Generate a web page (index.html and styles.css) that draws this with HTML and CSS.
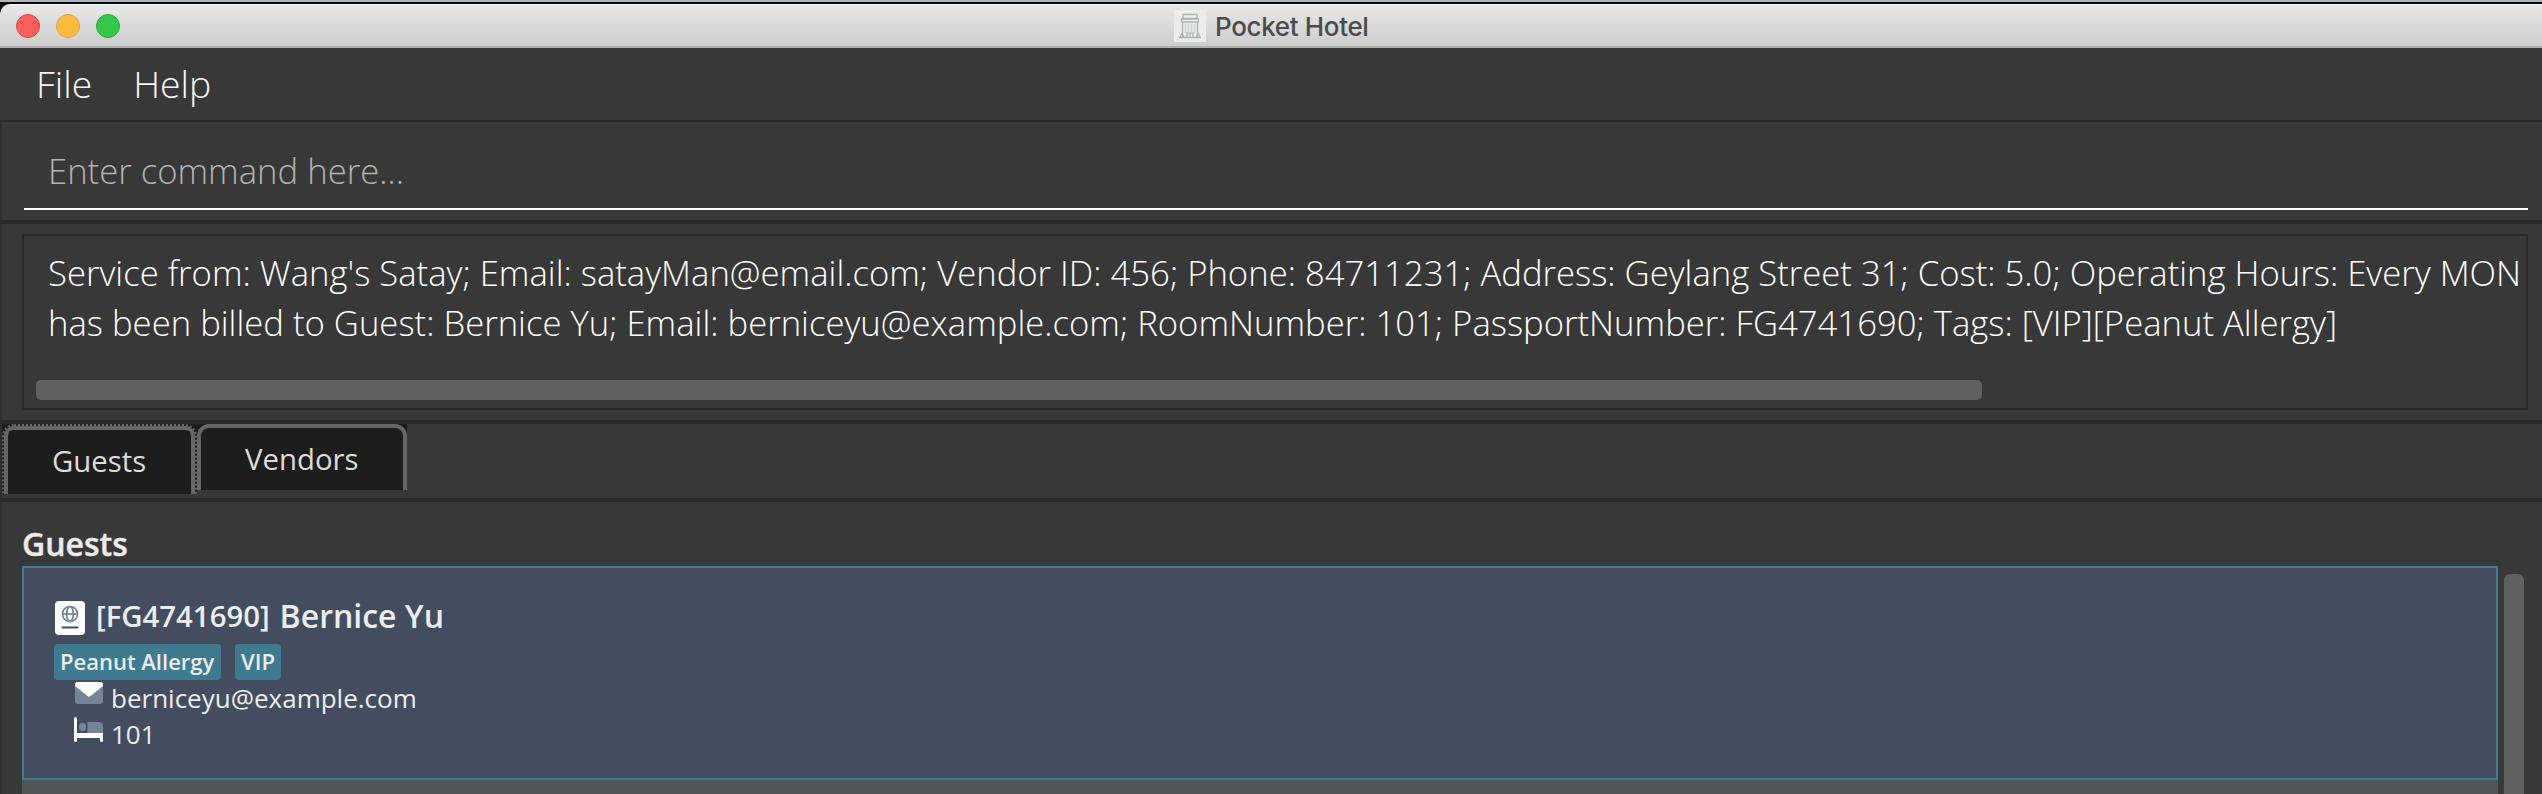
FILE: index.html
```html
<!DOCTYPE html>
<html lang="en">
<head>
<meta charset="utf-8">
<title>Pocket Hotel</title>
<link rel="stylesheet" href="styles.css">
</head>
<body>
<div class="desktop-strip"></div>
<div class="window">
  <header class="titlebar">
    <div class="lights"><span class="light red"></span><span class="light amber"></span><span class="light green"></span></div>
    <div class="title">
      <svg class="app-icon" viewBox="0 0 32 32"><rect width="32" height="32" fill="#ececec"/><g fill="none" stroke="#b0b2b5" stroke-width="1.300"><path d="M9 4.500h14v4H9zM7.500 9h17v3h-17zM8.500 12v15M23.500 12v15M5 27.500h22M13 27v-4h6v4M16 23v4M6 27l2-4 2 4M22 27l2-4 2 4"/></g><path d="M11.500 14v9M14.500 14v9M17.500 14v9M20.500 14v9" stroke="#cfd1d3" stroke-width="1.500"/></svg>
      <span class="title-text">Pocket Hotel</span>
    </div>
  </header>
  <nav class="menubar"><span>File</span><span>Help</span></nav>
  <section class="command"><div class="field"><span>Enter command here...</span></div></section>
  <section class="result">
    <div class="result-box">
      <p class="line">Service from: Wang's Satay; Email: satayMan@email.com; Vendor ID: 456; Phone: 84711231; Address: Geylang Street 31; Cost: 5.0; Operating Hours: Every MON</p>
      <p class="line">has been billed to Guest: Bernice Yu; Email: berniceyu@example.com; RoomNumber: 101; PassportNumber: FG4741690; Tags: [VIP][Peanut Allergy]</p>
      <div class="hscroll"></div>
    </div>
  </section>
  <div class="tabs">
    <div class="tab-slot first"><div class="tab active">Guests</div></div>
    <div class="tab-slot second"><div class="tab">Vendors</div></div>
  </div>
  <main class="panel">
    <h1 class="heading">Guests</h1>
    <div class="list">
      <div class="cards">
        <article class="card">
          <div class="name-row">
            <svg class="passport" viewBox="0 0 30 34"><rect width="30" height="34" rx="4" fill="#fff"/><g fill="none" stroke="#748399" stroke-width="1.700"><circle cx="15" cy="13" r="7.500"/><ellipse cx="15" cy="13" rx="3.300" ry="7.500"/><path d="M7.500 13h15"/></g><path d="M7.500 26.500h15" stroke="#434d5f" stroke-width="2" stroke-linecap="round"/></svg>
            <span class="passport-no">[FG4741690]</span><span class="name">Bernice Yu</span>
          </div>
          <div class="tags"><span class="tag peanut">Peanut Allergy</span><span class="tag vip">VIP</span></div>
          <div class="detail">
            <svg class="mail-icon" viewBox="0 0 28 22"><rect width="28" height="22" rx="3" fill="#75849a"/><path d="M0 4V2.500Q0 0 2.500 0h23Q28 0 28 2.500V4L15.500 14Q14 15.500 12.500 14z" fill="#fff"/></svg>
            <span>berniceyu@example.com</span>
          </div>
          <div class="detail">
            <svg class="bed-icon" viewBox="0 0 30 25"><ellipse cx="8.500" cy="10" rx="3.500" ry="4.300" fill="#75849a"/><path d="M13.500 5H25q4 0 4 5v6H13.500z" fill="#75849a"/><path d="M1.500 0Q3 0 3 1.500V16H29v7.500q0 1.500-1.500 1.500T26 23.500V21H3v2.500Q3 25 1.500 25T0 23.500v-22Q0 0 1.500 0z" fill="#fff"/></svg>
            <span>101</span>
          </div>
        </article>
        <div class="next-card"></div>
      </div>
      <div class="vscroll"></div>
    </div>
  </main>
</div>
</body>
</html>
```
FILE: styles.css
```css
* { box-sizing: border-box; }
body { margin: 0; width: 2542px; height: 794px; overflow: hidden; background: #05070f; font-family: "Open Sans", "Noto Sans", sans-serif; color: #fff; }
.desktop-strip { height: 4px; background: #05070f; border-top: 2px solid #b3b5be; }
.window { height: 790px; display: flex; flex-direction: column; border-radius: 10px 0 0 0; overflow: hidden; background: #383838; }
.titlebar { height: 44px; flex: none; display: grid; grid-template-columns: 1174px 1fr; align-items: center; background: linear-gradient(#e8e8e8, #cdcdcd); border-top: 1px solid #f6f6f6; border-bottom: 2px solid #aeb0ae; }
.lights { display: flex; gap: 16px; padding-left: 16px; }
.light { width: 24px; height: 24px; border-radius: 50%; border: 1px solid #e0443e; background: #fc605c; }
.amber { background: #fdbc40; border-color: #dfa034; }
.green { background: #34c84a; border-color: #27aa35; }
.title { display: flex; align-items: center; gap: 9px; }
.app-icon { width: 32px; height: 32px; }
.title-text { font: 500 26px/30px Inter, sans-serif; letter-spacing: -0.35px; color: #4b4b4b; white-space: nowrap; padding-top: 2px; }
.menubar { height: 74px; flex: none; border-bottom: 2px solid #2a2a2a; display: flex; gap: 41px; padding: 11px 0 0 36px; font-size: 37.33px; line-height: 50px; font-weight: 300; color: #f6f6f6; }
.command { height: 102px; flex: none; border-bottom: 4px solid #2a2a2a; border-left: 2px solid #2f2f2f; padding: 14px 14px 10px 22px; }
.field { height: 74px; border-bottom: 2px solid #fff; padding: 10px 0 0 24px; font-size: 34.67px; line-height: 50px; font-weight: 300; color: #b2b2b2; }
.result { height: 200px; flex: none; border-bottom: 4px solid #2a2a2a; border-left: 2px solid #2f2f2f; padding: 10px 14px 10px 20px; }
.result-box { height: 176px; border: 2px solid #2a2a2a; padding: 12px 0 0 12px; }
.line { margin: 0; padding-left: 12px; font-size: 34.67px; line-height: 50px; font-weight: 300; white-space: nowrap; }
.hscroll { width: 1946px; height: 20px; border-radius: 5px; background: #606060; margin-top: 32px; }
.tabs { height: 78px; flex: none; display: flex; border-bottom: 4px solid #2a2a2a; border-left: 2px solid #2f2f2f; font-size: 29.33px; line-height: 40px; color: #dcdcdc; }
.tab-slot { background: #1d1d1d; }
.first { width: 195px; height: 70px; }
.second { width: 210px; height: 66px; }
.tab { height: 100%; border: 4px solid #666; border-bottom: 0; border-radius: 12px 12px 0 0; padding: 11px 0 0 44px; }
.active { border: 2px dotted #666; border-bottom: 0; box-shadow: inset 4px 0 #666, inset -4px 0 #666, inset 0 4px #666; padding: 15px 0 0 48px; }
.panel { height: 292px; border-left: 2px solid #2f2f2f; padding: 20px 18px 0 20px; }
.heading { margin: 0; height: 44px; font-size: 32px; line-height: 44px; font-weight: 600; color: #ebebeb; -webkit-text-stroke: 0.4px #ebebeb; }
.list { display: flex; gap: 6px; height: 228px; }
.cards { width: 2476px; }
.card { height: 214px; border: 2px solid #3e7b91; background: #434d5f; padding: 26px 0 0 30px; color: #ebedef; }
.name-row { display: flex; align-items: center; height: 44px; font-size: 32px; line-height: 44px; font-weight: 600; }
.passport { width: 30px; height: 34px; margin: 3px 11px 0 1px; }
.passport-no { font-size: 29.33px; margin-right: 10px; }
.tags { display: flex; gap: 14px; height: 36px; margin-top: 6px; }
.tag { height: 36px; border-radius: 4px; background: #3e7b91; padding: 0 0 0 6px; font-size: 22px; line-height: 35px; font-weight: 600; white-space: nowrap; }
.peanut { width: 167px; }
.vip { width: 46px; }
.detail { display: flex; height: 36px; padding-left: 20px; font-size: 26px; line-height: 36px; }
.mail-icon { width: 28px; height: 22px; margin: 2px 8px 0 1px; }
.bed-icon { width: 30px; height: 25px; margin: 1px 7px 0 0; }
.next-card { height: 14px; background: #515658; }
.vscroll { width: 20px; height: 230px; margin-top: 8px; border-radius: 6px 6px 0 0; background: #606060; }
```
